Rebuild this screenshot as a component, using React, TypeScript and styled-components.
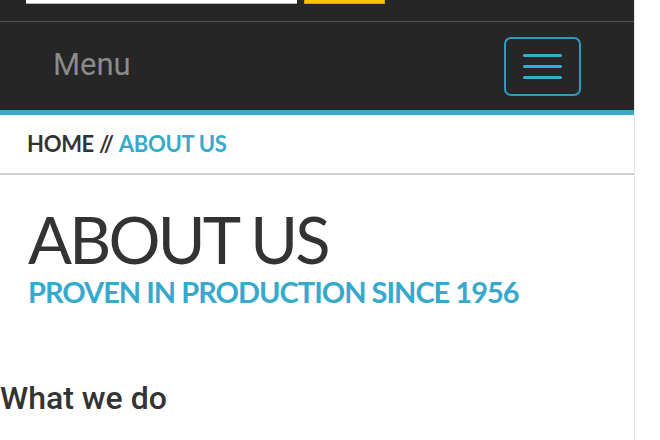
import { createGlobalStyle } from "styled-components";
import styled from "styled-components";

const Global = createGlobalStyle`
  html, body {
    margin: 0;
    padding: 0;
    background: #ffffff;
  }
  body {
    font-family: "Lato", "Liberation Sans", sans-serif;
    -webkit-font-smoothing: antialiased;
  }
`;

const Page = styled.div`
  width: 634px;
  min-height: 440px;
  border-right: 1px solid #e4e4e4;
  background: #fff;
`;

const Header = styled.header`
  background: #262626;
`;

const SearchRow = styled.div`
  display: flex;
  align-items: flex-start;
  gap: 7px;
  height: 21px;
  padding-left: 26px;
  border-bottom: 1px solid #555;
`;

const SearchInput = styled.div`
  width: 271px;
  height: 3px;
  background: #fff;
  border-bottom: 1px solid #b5b5b5;
`;

const SearchButton = styled.div`
  width: 79px;
  height: 3px;
  background: #f6c400;
  border: 1px solid #d4a700;
  border-top: none;
`;

const MenuBar = styled.nav`
  display: flex;
  align-items: center;
  justify-content: space-between;
  height: 88px;
  padding: 0 53px;
  border-bottom: 5px solid #37a9cc;
`;

const MenuLabel = styled.span`
  font-family: "Roboto", "Liberation Sans", sans-serif;
  font-size: 31px;
  line-height: 1;
  color: #8b8b8b;
  padding-bottom: 3px;
`;

const Toggle = styled.button`
  box-sizing: border-box;
  width: 77px;
  height: 59px;
  display: flex;
  flex-direction: column;
  align-items: center;
  justify-content: center;
  gap: 8px;
  padding: 0;
  background: transparent;
  border: 2px solid #2a9dbf;
  border-radius: 7px;
`;

const Bar = styled.span`
  display: block;
  width: 39px;
  height: 3px;
  border-radius: 2px;
  background: #35aed4;
`;

const Breadcrumb = styled.div`
  display: flex;
  align-items: center;
  height: 58px;
  padding-left: 27px;
  border-bottom: 2px solid #cfcfcf;
  font-size: 22px;
  font-weight: 700;
  line-height: 1;
  letter-spacing: -0.3px;
  color: #333;
  text-transform: uppercase;
`;

const Crumb = styled.span<{ $active?: boolean }>`
  color: ${({ $active }) => ($active ? "#36a9cc" : "#333")};
  white-space: pre;
`;

const Hero = styled.section`
  padding: 32px 0 0 28px;
`;

const Title = styled.h1`
  margin: 0;
  font-size: 65px;
  font-weight: 400;
  line-height: 1;
  letter-spacing: -2.8px;
  color: #333;
  text-transform: uppercase;
`;

const Tagline = styled.p`
  margin: 5px 0 0;
  font-size: 29px;
  font-weight: 700;
  line-height: 1;
  letter-spacing: -1px;
  color: #36a9cc;
  text-transform: uppercase;
`;

const SectionHeading = styled.h2`
  margin: 76px 0 0;
  font-family: "Roboto", "Liberation Sans", sans-serif;
  font-size: 32px;
  font-weight: 500;
  line-height: 1;
  color: #333;
`;

export default function App() {
  return (
    <>
      <Global />
      <Page>
        <Header>
          <SearchRow>
            <SearchInput />
            <SearchButton />
          </SearchRow>
          <MenuBar>
            <MenuLabel>Menu</MenuLabel>
            <Toggle aria-label="Toggle navigation">
              <Bar />
              <Bar />
              <Bar />
            </Toggle>
          </MenuBar>
        </Header>
        <Breadcrumb>
          <Crumb>Home // </Crumb>
          <Crumb $active>About us</Crumb>
        </Breadcrumb>
        <Hero>
          <Title>About us</Title>
          <Tagline>Proven in production since 1956</Tagline>
        </Hero>
        <SectionHeading>What we do</SectionHeading>
      </Page>
    </>
  );
}
